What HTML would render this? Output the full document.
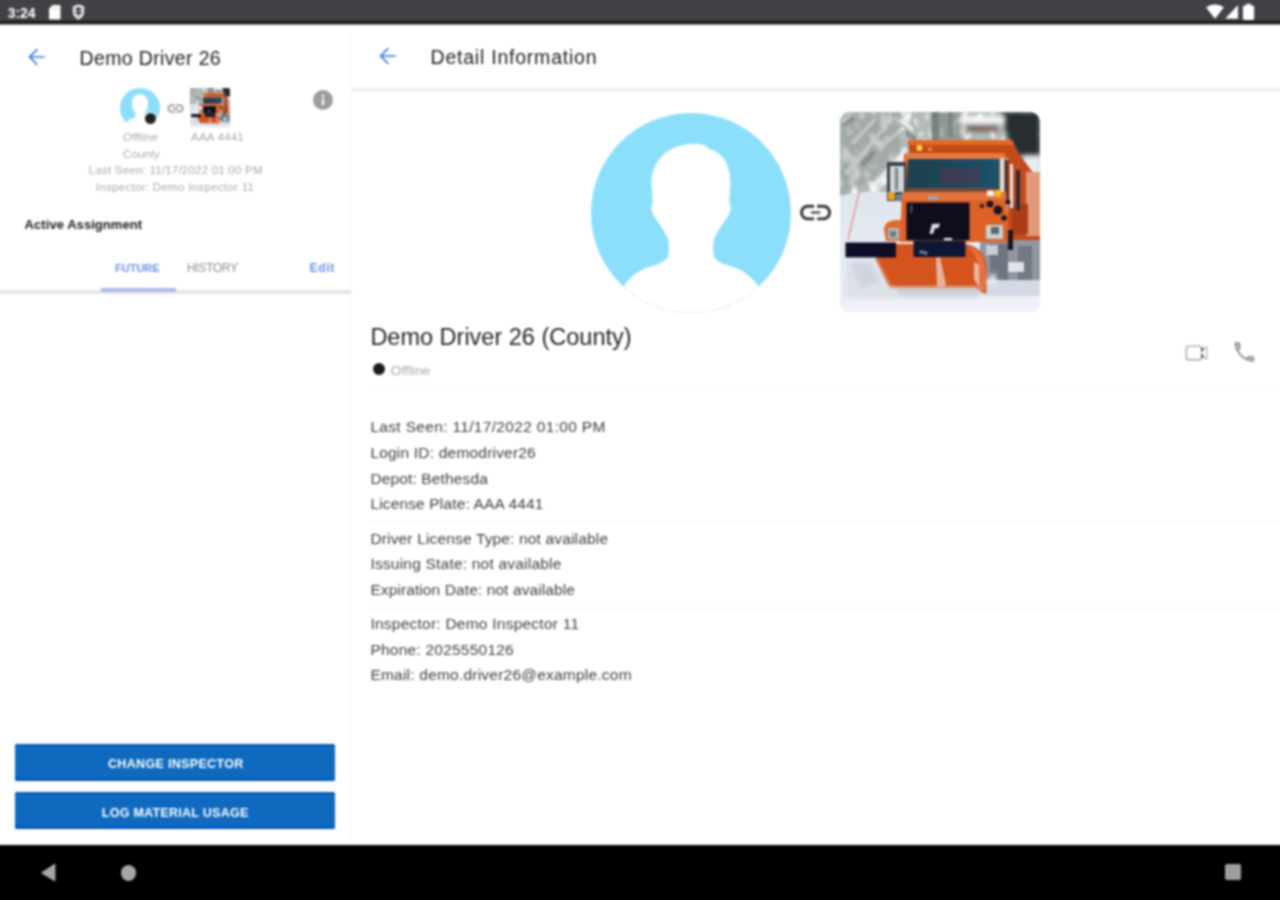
<!DOCTYPE html>
<html lang="en">
<head>
<meta charset="utf-8">
<title>Detail Information</title>
<style>
*{box-sizing:border-box;margin:0;padding:0}
html,body{width:1280px;height:900px;overflow:hidden;background:#fff}
body{position:relative;font-family:"Liberation Sans",sans-serif;color:#3a3a3a;-webkit-font-smoothing:antialiased}
#app{position:absolute;left:0;top:0;width:1280px;height:900px;will-change:transform;transform:translateZ(0);filter:url(#soft)}
.abs{position:absolute;white-space:nowrap;line-height:1}
#status{position:absolute;left:-10px;top:-10px;width:1300px;height:40px;background:linear-gradient(to bottom,#424146 0,#424146 31px,#121116 31.300px,#121116 32.800px,#424146 33.100px,#424146 34.200px,#fff 35.200px,#fff 40px)}
#nav{position:absolute;left:-10px;top:845px;width:1300px;height:65px;background:#000}
#left{position:absolute;left:0;top:30px;width:350px;height:815px;background:#fff}
#vsep{position:absolute;left:350px;top:30px;width:1.500px;height:815px;background:#fbfbfb}
#right{position:absolute;left:352px;top:30px;width:938px;height:815px;background:#fff}
#hsep{position:absolute;left:352px;top:88px;width:938px;height:3px;background:#ebebeb}
.t{position:absolute;white-space:nowrap;line-height:1;transform-origin:0 50%}
.info{font-size:15.5px;color:#3e3e3e}
.hd{font-size:19.5px;color:#1c1c1c}
.tab{font-size:11.5px}
.bl{font-size:12.5px;font-weight:bold;color:#fff}
.sm{font-size:11.5px;color:#aaaaaa}
.btn{position:absolute;left:15.3px;width:320.2px;height:36.600px;background:#0f69be;border-radius:2px;box-shadow:inset 0 -2.500px 0 #0354b4,inset 0 2px 0 #0559b8}
.div{position:absolute;left:368px;width:922px;height:2px;background:#f7f7f7}
</style>
</head>
<body>
<svg width="0" height="0" style="position:absolute"><filter id="soft" x="0" y="0" width="100%" height="100%" color-interpolation-filters="sRGB"><feGaussianBlur stdDeviation="0.9"/></filter></svg>
<div id="app">
<div id="status"></div>
<div id="left"></div>
<div id="vsep"></div>
<div id="right"></div>
<div id="hsep"></div>

<svg width="0" height="0" style="position:absolute">
<defs>
<filter id="blr" x="-5%" y="-5%" width="110%" height="110%"><feGaussianBlur stdDeviation="0.5"/></filter>
<filter id="blr2" x="-10%" y="-10%" width="120%" height="120%"><feGaussianBlur stdDeviation="2.2"/></filter>
<filter id="trees" x="0" y="0" width="100%" height="100%">
<feTurbulence type="fractalNoise" baseFrequency="0.10 0.075" numOctaves="3" seed="11" result="n"/>
<feColorMatrix in="n" type="matrix" values="0 0 0 0 0.42  0 0 0 0 0.47  0 0 0 0 0.45  6 0 0 0 -2.600" result="dark"/>
<feColorMatrix in="n" type="matrix" values="0 0 0 0 0.96  0 0 0 0 0.97  0 0 0 0 0.98  0 6 0 0 -3.100" result="lite"/>
<feMerge result="m"><feMergeNode in="dark"/><feMergeNode in="lite"/></feMerge>
<feGaussianBlur in="m" stdDeviation="0.9"/>
</filter>
<linearGradient id="snowg" x1="0" y1="0" x2="0" y2="1"><stop offset="0" stop-color="#dfe5ed"/><stop offset="1" stop-color="#eef1f6"/></linearGradient>
<linearGradient id="wsg" x1="0" y1="0" x2="1" y2="0"><stop offset="0" stop-color="#21414f"/><stop offset=".55" stop-color="#1a475d"/><stop offset="1" stop-color="#1f546c"/></linearGradient>
<clipPath id="tclip"><rect x="0" y="0" width="200" height="200" rx="10" ry="10"/></clipPath>
</defs>
</svg>

<!-- big avatar -->
<svg class="abs" style="left:591.2px;top:112.5px" width="200" height="200" viewBox="0 0 200 200">
<circle cx="100" cy="100" r="100" fill="#8cdffb"/>
<path id="sil" d="M101 31 C110 30 116 33 119 36.500 C131 39 140 52 139.500 72 C139 80 138 86 138.500 91 C140.500 93 139.500 99 137 103 C135 107 132 110 130 113 C127 119 123 124 122.500 128 C122 134 122 140 123 144 C126 149 134 152 142 154 C152 157 161 164 167.500 173.500 A100 100 0 0 1 32.500 173.500 C39 164 48 157 58 154 C66 152 74 149 77 144 C78 140 78 134 77.500 128 C77 124 73 119 70 113 C68 110 65 107 63 103 C60.500 99 59.500 93 61.500 91 C62 86 61 80 60.500 72 C60 48 76 32 101 31Z" fill="#fff"/>
</svg>
<!-- big link icon -->
<svg class="abs" style="left:797px;top:194.100px" width="37.200" height="37.200" viewBox="0 0 24 24"><path d="M3.900 12c0-1.710 1.390-3.100 3.100-3.100h4V7H7c-2.760 0-5 2.240-5 5s2.240 5 5 5h4v-1.900H7c-1.710 0-3.100-1.390-3.100-3.100zm13.100-5h-4v1.900h4c1.710 0 3.100 1.390 3.100 3.100s-1.390 3.100-3.100 3.100h-4V17h4c2.760 0 5-2.240 5-5s-2.240-5-5-5z" fill="#363636"/><rect x="8.900" y="11.050" width="6.200" height="1.900" rx=".6" fill="#747474"/></svg>
<!-- big truck -->
<svg class="abs" style="left:839.8px;top:112.200px" width="200" height="200" viewBox="0 0 200 200">
<g clip-path="url(#tclip)">
<rect width="200" height="200" fill="#e6ebf2"/>
<!-- tree backdrop -->
<rect x="0" y="0" width="200" height="92" fill="#b4bcb9"/>
<rect x="0" y="0" width="200" height="92" filter="url(#trees)"/>
<g filter="url(#blr)">
<path d="M92 0h7v30h-7z" fill="#5d6663" opacity=".8"/>
<path d="M108 0h5v26h-5z" fill="#6b7471" opacity=".7"/>
<path d="M4 60L40 18l3 2L8 64z" fill="#f1f4f5" opacity=".85"/>
<path d="M10 30L34 6l3 2L14 33z" fill="#eef2f3" opacity=".8"/>
<path d="M30 74L62 40l3 2L34 78z" fill="#f1f4f5" opacity=".8"/>
<path d="M44 30l18 -16l3 3l-18 16z" fill="#e9edee" opacity=".8"/>
<path d="M60 6l14 10l-2 3l-14 -10z" fill="#f3f5f6" opacity=".8"/>
<path d="M2 12l10 -8l3 3l-10 8z" fill="#59625e" opacity=".6"/>
<path d="M20 52l12 -14l4 3l-12 14z" fill="#5f6864" opacity=".55"/>
<path d="M66 18l10 6v6l-10 -6z" fill="#5f6864" opacity=".5"/>
</g>
<g filter="url(#blr2)">
<path d="M0 0H60V40L30 70L0 82Z" fill="#8f9792" opacity=".45"/>
<path d="M92 0h30v30h-30z" fill="#7d8683" opacity=".7"/>
<path d="M160 0h40v60l-18 -8l-14 -26z" fill="#262d33"/>
<path d="M120 4h44v8h-44z" fill="#f4f6f8"/>
<path d="M126 12h32v8h-32z" fill="#7c6d63"/>
<path d="M182 44h18v40h-14z" fill="#e9edf0"/>
</g>
<!-- snow ground -->
<path d="M0 84 Q30 76 64 82 L64 200 H0Z" fill="url(#snowg)" filter="url(#blr)"/>
<rect x="0" y="176" width="200" height="24" fill="#eaeef4"/>
<g filter="url(#blr)">
<!-- second body / right side -->
<path d="M168 30 L182 46 L200 70 V128 H168Z" fill="#c4481a"/>
<path d="M186 60h14v64h-14z" fill="#e29a78"/>
<path d="M172 92h16v30h-16z" fill="#a93a18"/>
<!-- wheels / spray right -->
<path d="M140 128H200V178H140Z" fill="#8f969f"/>
<path d="M150 132h18v36h-18z" fill="#6e757f"/>
<path d="M178 134h14v34h-14z" fill="#737a84"/>
<path d="M168 150h16v10h-16z" fill="#dfe4ea"/>
<path d="M142 168H200V184H142Z" fill="#d4dae3"/>
<!-- dump body -->
<path d="M68 28H172L181 46H70Z" fill="#c34a15"/>
<path d="M68 28H172L174 33H69Z" fill="#e36a24"/>
<!-- cab -->
<path d="M64 42H166V90H60Z" fill="#df6a30"/>
<path d="M66 41H164V47H66Z" fill="#e67a42"/>
<!-- windshield -->
<path d="M68 47H159.500V77.500H66Z" fill="url(#wsg)"/>
<path d="M100 56h40v16h-40z" fill="#4a3b55" opacity=".75"/>
<path d="M66 76H160V80H66Z" fill="#7a4a3a"/>
<!-- beacon -->
<circle cx="79.500" cy="36" r="3" fill="#ffd35a"/>
<circle cx="90" cy="37" r="2.200" fill="#f08030"/>
<!-- pillar + right mirror -->
<path d="M160 46h4v40h-4z" fill="#d9dde0"/>
<path d="M165 48h3v40h-3z" fill="#3a3338"/>
<path d="M170 52h3v44h-3z" fill="#e8e8e8"/>
<path d="M176 58h4v40h-4z" fill="#2b2b33"/>
<!-- left mirror -->
<path d="M47 50h19v39h-19z" fill="#3b4146"/>
<path d="M50 54h14v26h-14z" fill="#cfd6d8"/>
<path d="M55 56h3v22h-3z" fill="#7b8386"/>
<path d="M48 80h7v8h-7z" fill="#e8a62a"/>
<path d="M56 82h8v7h-8z" fill="#6f7f96"/>
<!-- hood -->
<path d="M62 80H166L170 130H60Z" fill="#de6228"/>
<path d="M62 80H166V88H62Z" fill="#e4733d"/>
<path d="M88 84h10v4h-10z" fill="#9aa4b4"/>
<!-- marker lights -->
<path d="M147 78.500h7v5.500h-7z" fill="#f6f4ee"/>
<path d="M155 78h6v6.500h-6z" fill="#f2c419"/>
<!-- black mirror arms on fender -->
<circle cx="150" cy="92" r="3.500" fill="#191920"/>
<circle cx="158" cy="98" r="4.500" fill="#191920"/>
<circle cx="164" cy="106" r="2.800" fill="#191920"/>
<circle cx="142" cy="94" r="2.200" fill="#2a2020"/>
<circle cx="168" cy="90" r="2.500" fill="#191920"/>
<!-- grille -->
<path d="M66.500 90.500H129.500V128H66.500Z" fill="#0b0b1c"/>
<path d="M70 93h2.500v8h-2.500z" fill="#3f4a66"/>
<path d="M92 112l8 -0.500l-1.500 4.500l-4 0.500l-1 5l-4 0.500z" fill="#dfe3e6"/>
<path d="M104 126h8v3h-8z" fill="#e9ecef"/>
<!-- headlights -->
<path d="M44 118Q44 108 58 108H61V129H46Z" fill="#e36a2c"/>
<path d="M48 116h11v11h-11z" fill="#aeb7be"/>
<path d="M50 119h6v6h-6z" fill="#6f7b84"/>
<path d="M146 113h17v14h-17z" fill="#c9d0d6"/>
<path d="M151 115h8v7h-8z" fill="#5f6870"/>
<path d="M168 118h5v20h-5z" fill="#15151f"/>
<path d="M146 133h12v10h-12z" fill="#c9ced6"/>
<!-- plow blade -->
<path d="M35 147L56 132H126Q146 136 146.500 158V181Q140 182 136 176H49Z" fill="#d5521c"/>
<path d="M127 134Q145 138 145.500 160V180L138 178V160Q138 142 127 134Z" fill="#e7713d"/>
<path d="M134 150l5 3v22l-5 -8z" fill="#f0cfc0" opacity=".8"/>
<path d="M96 146l4 -1l6 28l-4 3l-5 -2z" fill="#ecd6cc" opacity=".75"/>
<path d="M49 174H137V178H49Z" fill="#e88a62" opacity=".8"/>
<!-- rubber flaps -->
<path d="M5.500 130.500H56V145.500H5.500Z" fill="#0c0c28"/>
<path d="M73.500 128.500H125.500V145H73.500Z" fill="#0f1230"/>
<path d="M80 138l8 2l-1 3l-8 -2z" fill="#8d97b0" opacity=".8"/>
<!-- red marker -->
<path d="M20 77L17.300 88L8 128" fill="none" stroke="#e58f8f" stroke-width="1.300"/>
</g>
<!-- snow spray -->
<g filter="url(#blr2)">
<path d="M6 148H36L50 176L140 180V188H4Z" fill="#dde2ea"/>
<path d="M10 150H30L40 170L20 176Z" fill="#cfd5df"/>
<path d="M58 176H140V184H58Z" fill="#c9d0da"/>
<path d="M0 186H200V200H0Z" fill="#eef1f6"/>
<path d="M146 170l8 -10l4 12z" fill="#eef1f5"/>
</g>
</g>
</svg>

<!-- small avatar -->
<svg class="abs" style="left:120.4px;top:87.500px" width="40" height="40" viewBox="0 0 200 200">
<circle cx="100" cy="100" r="100" fill="#8cdffb"/>
<path d="M101 31 C110 30 116 33 119 36.500 C131 39 140 52 139.500 72 C139 80 138 86 138.500 91 C140.500 93 139.500 99 137 103 C135 107 132 110 130 113 C127 119 123 124 122.500 128 C122 134 122 140 123 144 C126 149 134 152 142 154 C152 157 161 164 167.500 173.500 A100 100 0 0 1 32.500 173.500 C39 164 48 157 58 154 C66 152 74 149 77 144 C78 140 78 134 77.500 128 C77 124 73 119 70 113 C68 110 65 107 63 103 C60.500 99 59.500 93 61.500 91 C62 86 61 80 60.500 72 C60 48 76 32 101 31Z" fill="#fff"/>
</svg>
<div style="position:absolute;left:143.400px;top:112px;width:13.600px;height:13.600px;border-radius:50%;background:#fff"></div>
<div style="position:absolute;left:144.700px;top:113.300px;width:11px;height:11px;border-radius:50%;background:#222"></div>
<svg class="abs" style="left:165.800px;top:98.600px" width="19.200" height="19.200" viewBox="0 0 24 24"><path d="M3.900 12c0-1.710 1.390-3.100 3.100-3.100h4V7H7c-2.760 0-5 2.240-5 5s2.240 5 5 5h4v-1.900H7c-1.710 0-3.100-1.390-3.100-3.100zM8.600 13h6.800v-2H8.600v2zm8.400-6h-4v1.900h4c1.710 0 3.100 1.390 3.100 3.100s-1.390 3.100-3.100 3.100h-4V17h4c2.760 0 5-2.240 5-5s-2.240-5-5-5z" fill="#858585"/></svg>
<svg class="abs" style="left:190.400px;top:87.700px" width="40" height="40" viewBox="0 0 200 200">
<g clip-path="url(#tclip)">
<rect width="200" height="200" fill="#e6ebf2"/>
<!-- tree backdrop -->
<rect x="0" y="0" width="200" height="92" fill="#b4bcb9"/>
<rect x="0" y="0" width="200" height="92" filter="url(#trees)"/>
<g filter="url(#blr)">
<path d="M92 0h7v30h-7z" fill="#5d6663" opacity=".8"/>
<path d="M108 0h5v26h-5z" fill="#6b7471" opacity=".7"/>
<path d="M4 60L40 18l3 2L8 64z" fill="#f1f4f5" opacity=".85"/>
<path d="M10 30L34 6l3 2L14 33z" fill="#eef2f3" opacity=".8"/>
<path d="M30 74L62 40l3 2L34 78z" fill="#f1f4f5" opacity=".8"/>
<path d="M44 30l18 -16l3 3l-18 16z" fill="#e9edee" opacity=".8"/>
<path d="M60 6l14 10l-2 3l-14 -10z" fill="#f3f5f6" opacity=".8"/>
<path d="M2 12l10 -8l3 3l-10 8z" fill="#59625e" opacity=".6"/>
<path d="M20 52l12 -14l4 3l-12 14z" fill="#5f6864" opacity=".55"/>
<path d="M66 18l10 6v6l-10 -6z" fill="#5f6864" opacity=".5"/>
</g>
<g filter="url(#blr2)">
<path d="M0 0H60V40L30 70L0 82Z" fill="#8f9792" opacity=".45"/>
<path d="M92 0h30v30h-30z" fill="#7d8683" opacity=".7"/>
<path d="M160 0h40v60l-18 -8l-14 -26z" fill="#262d33"/>
<path d="M120 4h44v8h-44z" fill="#f4f6f8"/>
<path d="M126 12h32v8h-32z" fill="#7c6d63"/>
<path d="M182 44h18v40h-14z" fill="#e9edf0"/>
</g>
<!-- snow ground -->
<path d="M0 84 Q30 76 64 82 L64 200 H0Z" fill="url(#snowg)" filter="url(#blr)"/>
<rect x="0" y="176" width="200" height="24" fill="#eaeef4"/>
<g filter="url(#blr)">
<!-- second body / right side -->
<path d="M168 30 L182 46 L200 70 V128 H168Z" fill="#c4481a"/>
<path d="M186 60h14v64h-14z" fill="#e29a78"/>
<path d="M172 92h16v30h-16z" fill="#a93a18"/>
<!-- wheels / spray right -->
<path d="M140 128H200V178H140Z" fill="#8f969f"/>
<path d="M150 132h18v36h-18z" fill="#6e757f"/>
<path d="M178 134h14v34h-14z" fill="#737a84"/>
<path d="M168 150h16v10h-16z" fill="#dfe4ea"/>
<path d="M142 168H200V184H142Z" fill="#d4dae3"/>
<!-- dump body -->
<path d="M68 28H172L181 46H70Z" fill="#c34a15"/>
<path d="M68 28H172L174 33H69Z" fill="#e36a24"/>
<!-- cab -->
<path d="M64 42H166V90H60Z" fill="#df6a30"/>
<path d="M66 41H164V47H66Z" fill="#e67a42"/>
<!-- windshield -->
<path d="M68 47H159.500V77.500H66Z" fill="url(#wsg)"/>
<path d="M100 56h40v16h-40z" fill="#4a3b55" opacity=".75"/>
<path d="M66 76H160V80H66Z" fill="#7a4a3a"/>
<!-- beacon -->
<circle cx="79.500" cy="36" r="3" fill="#ffd35a"/>
<circle cx="90" cy="37" r="2.200" fill="#f08030"/>
<!-- pillar + right mirror -->
<path d="M160 46h4v40h-4z" fill="#d9dde0"/>
<path d="M165 48h3v40h-3z" fill="#3a3338"/>
<path d="M170 52h3v44h-3z" fill="#e8e8e8"/>
<path d="M176 58h4v40h-4z" fill="#2b2b33"/>
<!-- left mirror -->
<path d="M47 50h19v39h-19z" fill="#3b4146"/>
<path d="M50 54h14v26h-14z" fill="#cfd6d8"/>
<path d="M55 56h3v22h-3z" fill="#7b8386"/>
<path d="M48 80h7v8h-7z" fill="#e8a62a"/>
<path d="M56 82h8v7h-8z" fill="#6f7f96"/>
<!-- hood -->
<path d="M62 80H166L170 130H60Z" fill="#de6228"/>
<path d="M62 80H166V88H62Z" fill="#e4733d"/>
<path d="M88 84h10v4h-10z" fill="#9aa4b4"/>
<!-- marker lights -->
<path d="M147 78.500h7v5.500h-7z" fill="#f6f4ee"/>
<path d="M155 78h6v6.500h-6z" fill="#f2c419"/>
<!-- black mirror arms on fender -->
<circle cx="150" cy="92" r="3.500" fill="#191920"/>
<circle cx="158" cy="98" r="4.500" fill="#191920"/>
<circle cx="164" cy="106" r="2.800" fill="#191920"/>
<circle cx="142" cy="94" r="2.200" fill="#2a2020"/>
<circle cx="168" cy="90" r="2.500" fill="#191920"/>
<!-- grille -->
<path d="M66.500 90.500H129.500V128H66.500Z" fill="#0b0b1c"/>
<path d="M70 93h2.500v8h-2.500z" fill="#3f4a66"/>
<path d="M92 112l8 -0.500l-1.500 4.500l-4 0.500l-1 5l-4 0.500z" fill="#dfe3e6"/>
<path d="M104 126h8v3h-8z" fill="#e9ecef"/>
<!-- headlights -->
<path d="M44 118Q44 108 58 108H61V129H46Z" fill="#e36a2c"/>
<path d="M48 116h11v11h-11z" fill="#aeb7be"/>
<path d="M50 119h6v6h-6z" fill="#6f7b84"/>
<path d="M146 113h17v14h-17z" fill="#c9d0d6"/>
<path d="M151 115h8v7h-8z" fill="#5f6870"/>
<path d="M168 118h5v20h-5z" fill="#15151f"/>
<path d="M146 133h12v10h-12z" fill="#c9ced6"/>
<!-- plow blade -->
<path d="M35 147L56 132H126Q146 136 146.500 158V181Q140 182 136 176H49Z" fill="#d5521c"/>
<path d="M127 134Q145 138 145.500 160V180L138 178V160Q138 142 127 134Z" fill="#e7713d"/>
<path d="M134 150l5 3v22l-5 -8z" fill="#f0cfc0" opacity=".8"/>
<path d="M96 146l4 -1l6 28l-4 3l-5 -2z" fill="#ecd6cc" opacity=".75"/>
<path d="M49 174H137V178H49Z" fill="#e88a62" opacity=".8"/>
<!-- rubber flaps -->
<path d="M5.500 130.500H56V145.500H5.500Z" fill="#0c0c28"/>
<path d="M73.500 128.500H125.500V145H73.500Z" fill="#0f1230"/>
<path d="M80 138l8 2l-1 3l-8 -2z" fill="#8d97b0" opacity=".8"/>
<!-- red marker -->
<path d="M20 77L17.300 88L8 128" fill="none" stroke="#e58f8f" stroke-width="1.300"/>
</g>
<!-- snow spray -->
<g filter="url(#blr2)">
<path d="M6 148H36L50 176L140 180V188H4Z" fill="#dde2ea"/>
<path d="M10 150H30L40 170L20 176Z" fill="#cfd5df"/>
<path d="M58 176H140V184H58Z" fill="#c9d0da"/>
<path d="M0 186H200V200H0Z" fill="#eef1f6"/>
<path d="M146 170l8 -10l4 12z" fill="#eef1f5"/>
</g>
</g>
</svg>

<!-- video + phone icons -->
<svg class="abs" style="left:1183px;top:342px" width="28" height="22" viewBox="0 0 28 22"><rect x="3.400" y="4.100" width="15.300" height="13.600" rx="2.200" fill="none" stroke="#a3a3a3" stroke-width="1.400"/><path d="M18.700 7.600L23.800 4.700V17.100L18.700 14.200" fill="none" stroke="#b4b4b4" stroke-width="1.300" stroke-linejoin="round"/><circle cx="19.300" cy="7.300" r="1.250" fill="#2c2c2c"/><circle cx="19.300" cy="14.300" r="1.250" fill="#2c2c2c"/></svg>
<svg class="abs" style="left:1231.100px;top:339.100px" width="26.500" height="26.500" viewBox="0 0 24 24"><path d="M4 3.700H7.400C7.500 5.200 7.700 6.600 8.100 7.800L5.700 10.200C4.600 8.300 4 6 4 3.700ZM20.300 20V16.600C18.800 16.500 17.400 16.300 16.200 15.900L13.800 18.300C15.700 19.400 18 20 20.300 20ZM5.700 10.200C7.600 13.600 10.400 16.400 13.800 18.300" fill="none" stroke="#808080" stroke-width="1.350" stroke-linejoin="round" stroke-linecap="round"/><path d="M4.600 4.300H7L7.400 7.600L5.800 9.200Z" fill="#b9b9b9"/><path d="M19.700 19.400V17L16.400 16.600L14.800 18.200Z" fill="#b9b9b9"/></svg>

<!-- status icons -->
<svg class="abs" style="left:48px;top:4px" width="14" height="17" viewBox="0 0 14 17"><path d="M4.6 1 H11.2 Q12.5 1 12.5 2.3 V14.2 Q12.5 15.5 11.2 15.5 H2.3 Q1 15.5 1 14.2 V4.8 Z" fill="#fff"/><path d="M5.6 3.2v2.3M7.8 3.2v2.3M10 3.2v2.3" stroke="#c9c9cc" stroke-width="1"/></svg>
<svg class="abs" style="left:71px;top:3px" width="15" height="18" viewBox="0 0 15 18"><path d="M7.5 1.2 L13.2 3.2 V8.6 C13.2 12.6 10.8 15.4 7.5 16.8 C4.2 15.4 1.8 12.6 1.8 8.6 V3.2 Z" fill="#e4e4e6"/><path d="M4.600 6.200h5.800M4.600 9.800h5.800" stroke="#2e2d32" stroke-width="1.900"/><path d="M7.500 4v9.500" stroke="#2e2d32" stroke-width="1.300"/></svg>
<svg class="abs" style="left:1205px;top:2px" width="52" height="20" viewBox="0 0 52 20"><path d="M10 16.8 L1.2 5.6 C3.6 3.6 6.6 2.4 10 2.4 C13.4 2.4 16.4 3.6 18.8 5.6 Z" fill="#fff"/><path d="M20.2 16.8 L33 3 V16.8 Z" fill="#fff"/><path d="M41.2 1.8h4.6v1.7h1.9q1.4 0 1.4 1.4v11.7q0 1.4 -1.4 1.4h-8.4q-1.4 0 -1.4 -1.4v-11.7q0 -1.4 1.4 -1.4h1.9z" fill="#fff"/></svg>

<!-- back arrows -->
<svg class="abs" style="left:24.5px;top:44.5px" width="24" height="24" viewBox="0 0 24 24"><path d="M19.800 12H4.800M12.400 4.200L4.600 12l7.800 7.800" fill="none" stroke="#3b78e0" stroke-width="1.7"/></svg>
<svg class="abs" style="left:375.5px;top:44.4px" width="24" height="24" viewBox="0 0 24 24"><path d="M19.800 12H4.800M12.400 4.200L4.600 12l7.800 7.800" fill="none" stroke="#3b78e0" stroke-width="1.7"/></svg>

<!-- info icon -->
<svg class="abs" style="left:310.5px;top:88px" width="24" height="24" viewBox="0 0 24 24"><circle cx="12" cy="12" r="10" fill="#9c9c9c"/><rect x="10.9" y="10.6" width="2.2" height="6.6" fill="#fff"/><rect x="10.9" y="6.8" width="2.2" height="2.3" fill="#fff"/></svg>

<!-- status bar text -->
<div class="t" id="clk" style="left:7.800px;top:5.500px;letter-spacing:-0.100px;font-size:14px;font-weight:bold;color:#fff">3:24</div>

<!-- left header -->
<div class="t hd" id="hl" style="left:79.6px;top:48.8px;letter-spacing:0.35px">Demo Driver 26</div>

<!-- right header -->
<div class="t hd" id="hr" style="left:430.6px;top:48.2px;letter-spacing:0.77px">Detail Information</div>

<!-- left summary -->
<div class="t sm" id="s1" style="left:123.0px;top:132.2px;letter-spacing:0.27px">Offline</div>
<div class="t sm" id="s2" style="left:191.0px;top:132.2px;letter-spacing:0.23px">AAA 4441</div>
<div class="t sm" id="s3" style="left:123.0px;top:148.8px;letter-spacing:0.08px">County</div>
<div class="t sm" id="s4" style="left:88.8px;top:165.0px;letter-spacing:0.22px">Last Seen: 11/17/2022 01:00 PM</div>
<div class="t sm" id="s5" style="left:95.8px;top:181.6px;letter-spacing:0.30px">Inspector: Demo Inspector 11</div>

<div class="t" id="aa" style="left:24.6px;top:218.0px;letter-spacing:0.06px;font-size:13px;font-weight:bold;color:#1a1a1a">Active Assignment</div>
<div class="t tab" id="tf" style="left:115.0px;top:262.8px;letter-spacing:0.00px;font-weight:bold;font-size:11px;color:#6a92e8">FUTURE</div>
<div class="t tab" id="th" style="left:187.0px;top:262.0px;letter-spacing:-0.33px;font-size:12px;color:#8f8f8f">HISTORY</div>
<div class="t tab" id="te" style="left:309.6px;top:262.0px;letter-spacing:0.66px;font-weight:bold;font-size:12px;color:#6a92e8">Edit</div>
<div style="position:absolute;left:-10px;top:290px;width:361px;height:4px;background:linear-gradient(#e6e6e6,#e2e2e2 50%,#ededed)"></div>
<div style="position:absolute;left:100.5px;top:288px;width:75px;height:4px;background:#a9bcec"></div>

<div class="btn" style="top:744.300px"></div>
<div class="btn" style="top:792.200px"></div>
<div class="t bl" id="b1" style="left:108.0px;top:758.0px;letter-spacing:0.33px">CHANGE INSPECTOR</div>
<div class="t bl" id="b2" style="left:101.8px;top:807.0px;letter-spacing:0.27px">LOG MATERIAL USAGE</div>

<!-- right content -->
<div class="t" id="name" style="left:370.4px;top:326.0px;letter-spacing:-0.00px;font-size:23.5px;color:#242424">Demo Driver 26 (County)</div>
<div style="position:absolute;left:373px;top:362.7px;width:12.3px;height:12.3px;border-radius:50%;background:#1c1c1c"></div>
<div class="t" id="off" style="left:390.8px;top:364.0px;letter-spacing:0.13px;font-size:13.5px;color:#a9a9a9">Offline</div>

<div class="t info" id="i1" style="left:370.4px;top:419.4px;letter-spacing:0.33px">Last Seen: 11/17/2022 01:00 PM</div>
<div class="t info" id="i2" style="left:370.4px;top:445.0px;letter-spacing:0.20px">Login ID: demodriver26</div>
<div class="t info" id="i3" style="left:370.4px;top:470.8px;letter-spacing:0.14px">Depot: Bethesda</div>
<div class="t info" id="i4" style="left:370.4px;top:495.8px;letter-spacing:0.15px">License Plate: AAA 4441</div>
<div class="div" style="top:386px;background:#fafafa"></div>
<div class="div" style="top:520.5px"></div>
<div class="t info" id="i5" style="left:370.4px;top:531.2px;letter-spacing:0.16px">Driver License Type: not available</div>
<div class="t info" id="i6" style="left:370.4px;top:556.4px;letter-spacing:0.21px">Issuing State: not available</div>
<div class="t info" id="i7" style="left:370.4px;top:582.0px;letter-spacing:0.10px">Expiration Date: not available</div>
<div class="div" style="top:607.5px"></div>
<div class="t info" id="i8" style="left:370.4px;top:616.4px;letter-spacing:0.24px">Inspector: Demo Inspector 11</div>
<div class="t info" id="i9" style="left:370.4px;top:642.0px;letter-spacing:0.23px">Phone: 2025550126</div>
<div class="t info" id="i10" style="left:370.4px;top:667.0px;letter-spacing:0.22px">Email: demo.driver26@example.com</div>

<div id="nav"></div>
<svg class="abs" style="left:38px;top:860px" width="22" height="26" viewBox="0 0 22 26"><path d="M3.6 12.2 L16.2 4.1 Q17.4 3.4 17.4 4.8 V20.4 Q17.4 21.8 16.2 21.1 L3.6 13.4 Q2.6 12.8 3.6 12.2Z" fill="#a6a6a6"/></svg>
<div style="position:absolute;left:120.600px;top:865.300px;width:15.500px;height:15.500px;border-radius:50%;background:#a6a6a6"></div>
<div style="position:absolute;left:1224.5px;top:864.3px;width:16.2px;height:16.2px;border-radius:2px;background:#9e9e9e"></div>
</div>
</body>
</html>
